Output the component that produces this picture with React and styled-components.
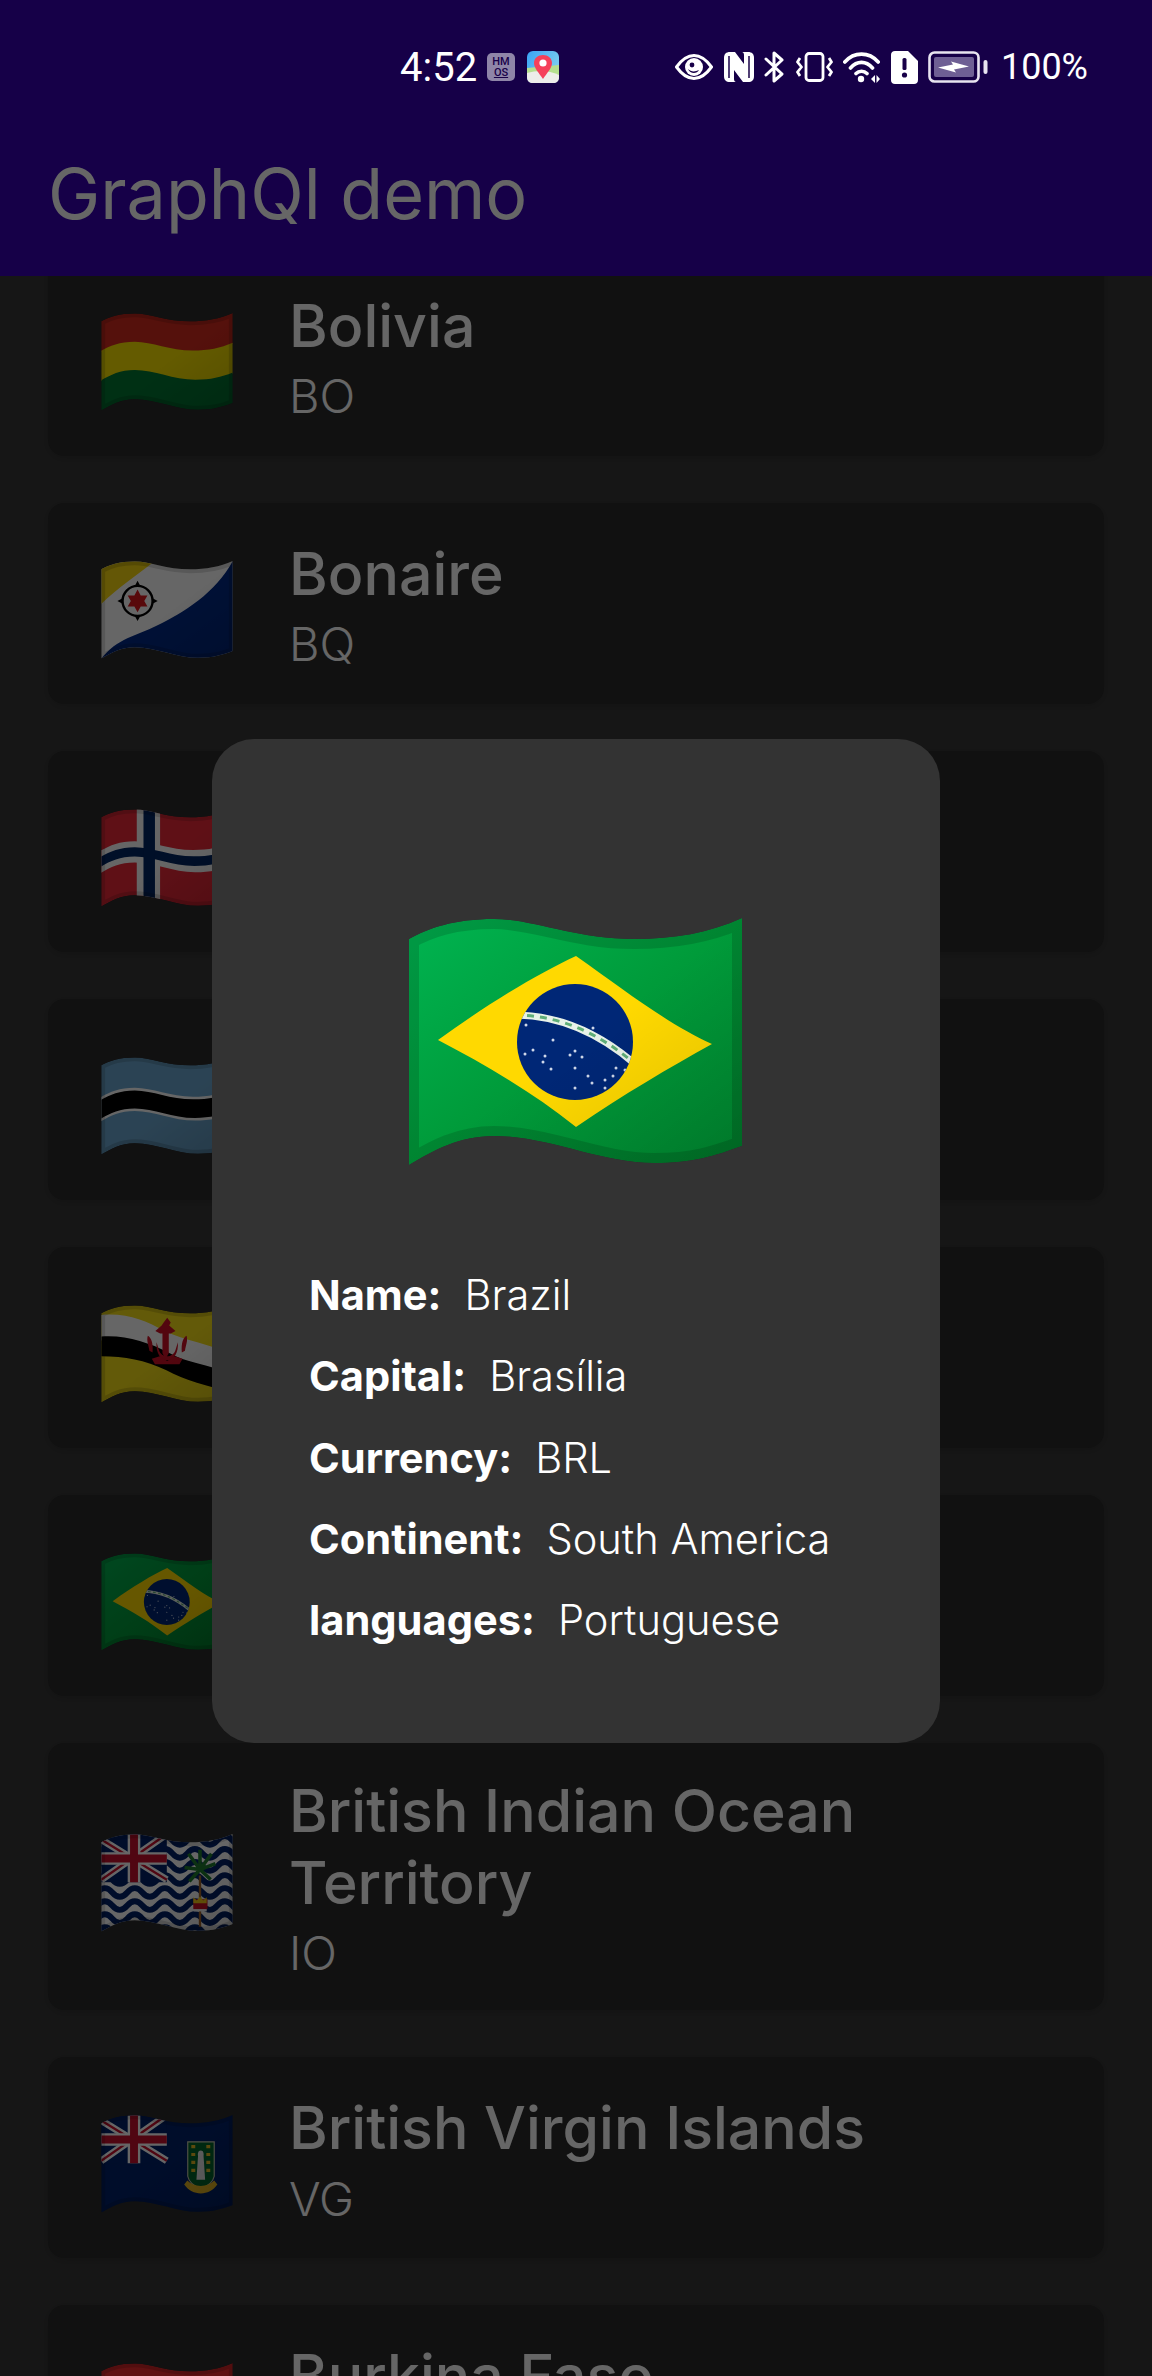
import React from "react";
import styled, { createGlobalStyle } from "styled-components";

// shared wave outline of the flag glyphs, top and bottom edges in the same 3 segments
const TOP = [[0, 21], [20, 10], [45, 1], [85, 1], [125, 1], [165, 21], [225, 21], [265, 21], [300, 15], [333, 0]];
const BOTTOM = [[0, 247], [25, 232], [50, 218], [85, 218], [140, 218], [190, 245], [245, 245], [285, 245], [305, 238], [333, 228]];

const edge = (v) =>
  TOP.map((p, i) => [p[0] + (BOTTOM[i][0] - p[0]) * v, p[1] + (BOTTOM[i][1] - p[1]) * v]);

const fmt = (p) => `${p[0].toFixed(1)} ${p[1].toFixed(1)}`;

// closed path for a stripe that follows the wave, v0 and v1 between 0 (top) and 1 (bottom)
const band = (v0, v1) => {
  const a = edge(v0);
  const b = edge(v1).reverse();
  return `M${fmt(a[0])} C${a.slice(1).map(fmt).join(" ")} L${fmt(b[0])} C${b.slice(1).map(fmt).join(" ")} Z`;
};

const waveOutline = band(0, 1);

const GlobalStyle = createGlobalStyle`
  html, body {
    margin: 0;
    padding: 0;
    background: #383838;
  }
`;

let flagCount = 0;

const Flag = ({ children, big }) => {
  const id = React.useMemo(() => `flag${flagCount++}`, []);
  return (
    <FlagSvg $big={big} viewBox="0 0 333 248">
      <defs>
        <clipPath id={`${id}c`}>
          <path d={waveOutline} />
        </clipPath>
        <linearGradient id={`${id}g`} x1="0" y1="0" x2="1" y2="1">
          <stop offset="0.5" stopColor="#000" stopOpacity="0" />
          <stop offset="1" stopColor="#000" stopOpacity="0.14" />
        </linearGradient>
      </defs>
      <g clipPath={`url(#${id}c)`}>
        {children}
        <rect width="333" height="248" fill={`url(#${id}g)`} />
        <path d={waveOutline} fill="none" stroke="#000" strokeOpacity="0.14" strokeWidth="20" />
      </g>
    </FlagSvg>
  );
};

const Bolivia = () => (
  <>
    <path d={band(0, 0.34)} fill="#d52b1e" />
    <path d={band(0.33, 0.67)} fill="#f9e300" />
    <path d={band(0.66, 1)} fill="#007934" />
  </>
);

const Bonaire = () => (
  <>
    <rect width="333" height="248" fill="#fff" />
    <path d="M0 109 C40 70 90 35 136 0 H0 Z" fill="#f9d90f" />
    <path d="M0 248 C40 195 90 190 140 164 C210 130 290 80 333 0 V248 Z" fill="#012a87" />
    <circle cx="92" cy="101" r="38" fill="none" stroke="#000" strokeWidth="6" />
    <path d="M92 50 l7 13 h-14z M92 152 l7 -13 h-14z M41 101 l13 -7 v14z M143 101 l-13 -7 v14z" fill="#000" />
    <path d="M92 72 l8 15 h17 l-8 14 l8 14 h-17 l-8 15 l-8 -15 h-17 l8 -14 l-8 -14 h17z" fill="#dc171d" />
  </>
);

const Bouvet = () => (
  <>
    <path d={band(0, 1)} fill="#ed2939" />
    <path d={band(0.37, 0.62)} fill="#fff" />
    <rect x="90" width="59" height="248" fill="#fff" />
    <path d={band(0.44, 0.55)} fill="#002664" />
    <rect x="107" width="29" height="248" fill="#002664" />
  </>
);

const Botswana = () => (
  <>
    <path d={band(0, 1)} fill="#6da9d2" />
    <path d={band(0.355, 0.625)} fill="#fff" />
    <path d={band(0.385, 0.595)} fill="#000" />
  </>
);

const Brunei = () => (
  <>
    <path d={band(0, 1)} fill="#f7e017" />
    <path d="M0 25 C70 20 110 40 160 65 C210 90 280 100 333 125 V190 C270 165 210 150 170 130 C120 105 60 90 0 90 Z" fill="#fff" />
    <path d="M0 80 C60 75 120 95 170 120 C210 145 270 150 333 175 V222 C270 205 210 190 165 165 C110 140 60 130 0 130 Z" fill="#000" />
    <g fill="#cf1126" transform="translate(28 10)">
      <path d="M130 34 l9 -12 l9 12 l-4 8 l16 14 l-12 6 h-5 v50 l-8 14 l-8 -14 v-50 h-6 l-12 -6 l16 -14z" />
      <path d="M90 68 c8 4 14 18 12 42 l-8 -4 c-2 -14 -8 -26 -4 -38z M188 68 c-8 4 -14 18 -12 42 l8 -4 c2 -14 8 -26 4 -38z" />
      <path d="M112 84 c-2 26 10 46 27 46 c17 0 29 -20 27 -46 l-6 20 c-3 10 -12 16 -21 16 c-9 0 -18 -6 -21 -16z" />
      <path d="M100 126 l20 -6 l19 12 l19 -12 l20 6 l-8 14 h-62z" />
    </g>
  </>
);

const stars = [
  [117, 107], [144, 122], [124, 132], [116, 136], [136, 138], [134, 144], [142, 151], [166, 133], [173, 139], [161, 137],
  [166, 150], [207, 150], [216, 152], [179, 158], [183, 165], [196, 162], [204, 158], [196, 170], [166, 170], [184, 110],
];

const Brazil = () => (
  <>
    <defs>
      <linearGradient id="brazilField" x1="0" y1="0" x2="1" y2="1">
        <stop offset="0" stopColor="#00b451" />
        <stop offset="0.5" stopColor="#009b3a" />
        <stop offset="1" stopColor="#008a30" />
      </linearGradient>
      <clipPath id="brazilGlobe">
        <ellipse cx="166" cy="124" rx="58" ry="58" />
      </clipPath>
    </defs>
    <path d={band(0, 1)} fill="url(#brazilField)" />
    <path d="M29 122 C80 85 130 55 167 38 C215 72 262 108 303 126 C260 150 215 176 167 209 C125 175 75 146 29 122 Z" fill="#ffd900" />
    <ellipse cx="166" cy="124" rx="58" ry="58" fill="#002776" />
    <g clipPath="url(#brazilGlobe)">
      <path d="M105 97 C150 97 190 115 226 146" fill="none" stroke="#e8f2e8" strokeWidth="7" />
      <path d="M105 97 C150 97 190 115 226 146" fill="none" stroke="#5fae78" strokeWidth="3" strokeDasharray="7 6" />
      {stars.map(([x, y]) => (
        <circle key={`${x}-${y}`} cx={x} cy={y} r="1.5" fill="#cfd8ea" />
      ))}
    </g>
  </>
);

const unionJack = (
  <>
    <rect width="166" height="122" fill="#012169" />
    <path d="M0 14 L166 116 M166 0 L0 116" stroke="#fff" strokeWidth="18" />
    <path d="M0 14 L166 116 M166 0 L0 116" stroke="#c8102e" strokeWidth="6" />
    <path d="M83 0 V122 M0 62 H166" stroke="#fff" strokeWidth="32" />
    <path d="M83 0 V122 M0 62 H166" stroke="#c8102e" strokeWidth="20" />
  </>
);

const Biot = () => (
  <>
    <rect width="333" height="248" fill="#fff" />
    {[0, 1, 2, 3, 4, 5, 6, 7].map((i) => (
      <path
        key={i}
        d={`M-10 ${i * 33 + 16} q19 -22 38 0 ${"t38 0 ".repeat(9)}`}
        fill="none"
        stroke="#012169"
        strokeWidth="15"
      />
    ))}
    {unionJack}
    <g transform="translate(11 10)">
      <path d="M239 95 V225" stroke="#a5672b" strokeWidth="6" />
      <path d="M239 80 L210 40 M239 80 L268 40 M239 80 L239 30 M239 80 L200 75 M239 80 L278 65 M239 80 L212 110 M239 80 L266 105" stroke="#1e7c2e" strokeWidth="9" />
      <path d="M222 155 h36 v24 c-8 8 -28 8 -36 0z" fill="#cf1126" />
      <path d="M222 150 l9 8 l8 -10 l8 10 l9 -8 v15 h-34z" fill="#fcd116" />
      <rect x="224" y="180" width="32" height="6" fill="#fff" />
    </g>
  </>
);

const Bvi = () => (
  <>
    <rect width="333" height="248" fill="#012169" />
    {unionJack}
    <g transform="translate(6 -50)">
      <path d="M213 118 H280 V205 C276 224 258 232 246 236 C234 232 217 224 213 205 Z" fill="#00662b" stroke="#c8c8b0" strokeWidth="3" />
      <path d="M246 140 c-7 0 -8 8 -7 14 l-4 60 h22 l-4 -60 c1 -6 0 -14 -7 -14z" fill="#e8e8e8" />
      <path d="M222 130 h10 M222 150 h10 M222 170 h10 M222 190 h10 M260 130 h10 M260 150 h10 M260 170 h10 M260 190 h10" stroke="#e8b923" strokeWidth="8" />
      <path d="M204 226 C225 256 267 256 288 226 L280 216 C264 234 228 234 212 216 Z" fill="#e8b923" />
    </g>
  </>
);

const BurkinaFaso = () => (
  <>
    <path d={band(0, 0.5)} fill="#ef2b2d" />
    <path d={band(0.5, 1)} fill="#009e49" />
  </>
);

const countries = [
  { name: "Bolivia", code: "BO", flag: <Bolivia /> },
  { name: "Bonaire", code: "BQ", flag: <Bonaire /> },
  { name: "Bouvet Island", code: "BV", flag: <Bouvet /> },
  { name: "Botswana", code: "BW", flag: <Botswana /> },
  { name: "Brunei", code: "BN", flag: <Brunei /> },
  { name: "Brazil", code: "BR", flag: <Brazil /> },
  { name: "British Indian Ocean Territory", code: "IO", flag: <Biot /> },
  { name: "British Virgin Islands", code: "VG", flag: <Bvi /> },
  { name: "Burkina Faso", code: "BF", flag: <BurkinaFaso /> },
];

const details = [
  ["Name:", "Brazil"],
  ["Capital:", "Brasília"],
  ["Currency:", "BRL"],
  ["Continent:", "South America"],
  ["languages:", "Portuguese"],
];

const StatusIcons = () => (
  <>
    <Icon width="38" height="26" viewBox="0 0 38 26">
      <path d="M1.5 13 C8 4 13 1.5 19 1.5 C25 1.5 30 4 36.5 13 C30 22 25 24.5 19 24.5 C13 24.5 8 22 1.5 13 Z" fill="none" stroke="#fff" strokeWidth="3" />
      <circle cx="19" cy="13" r="9" fill="#fff" />
      <path d="M13 15 C15 20 22 20 24 16 C20 18 16 18 13 15 Z" fill="#180048" />
      <circle cx="17" cy="11" r="2.4" fill="#180048" />
    </Icon>
    <Icon width="30" height="30" viewBox="0 0 30 30">
      <path d="M6 0 H11 L20 12 V3 C20 1 19 0 18 0 H24 C28 0 30 2 30 6 V24 C30 28 28 30 24 30 H19 L10 18 V27 C10 29 11 30 12 30 H6 C2 30 0 28 0 24 V6 C0 2 2 0 6 0 Z" fill="#fff" />
      <path d="M5 4 V26 M25 4 V26" stroke="#180048" strokeWidth="1.5" />
    </Icon>
    <Icon width="21" height="32" viewBox="0 0 21 32">
      <path d="M2 8 L18 23 L10 30 V2 L18 9 L2 24" fill="none" stroke="#fff" strokeWidth="3" strokeLinejoin="round" strokeLinecap="round" />
    </Icon>
    <Icon width="37" height="30" viewBox="0 0 37 30">
      <rect x="10" y="1.5" width="17" height="27" rx="3" fill="none" stroke="#fff" strokeWidth="2.8" />
      <path d="M4 6 L1.5 10 L5.5 15 L1.5 20 L4 24 M33 6 L35.5 10 L31.5 15 L35.5 20 L33 24" fill="none" stroke="#fff" strokeWidth="2.8" strokeLinejoin="round" />
    </Icon>
    <Icon width="37" height="32" viewBox="0 0 37 32">
      <path d="M1.8 11 C11 0.5 26 0.5 35.2 11 M7.5 17 C14 9.5 23 9.5 29.5 17 M13 22.5 C16 19.5 21 19.5 24 22.5" fill="none" stroke="#fff" strokeWidth="3.6" strokeLinecap="round" />
      <circle cx="18" cy="28" r="3.2" fill="#fff" />
      <path d="M28 28 l4 -4 v8z M33.5 24 l3.5 4 l-3.5 4z" fill="#fff" />
    </Icon>
    <Icon width="27" height="33" viewBox="0 0 27 33">
      <path d="M4 0 H17 L27 10 V29 C27 31.5 25.5 33 23 33 H4 C1.5 33 0 31.5 0 29 V4 C0 1.5 1.5 0 4 0 Z" fill="#fff" />
      <rect x="11.5" y="7" width="4" height="12" rx="1.5" fill="#180048" />
      <circle cx="13.5" cy="24" r="2.6" fill="#180048" />
    </Icon>
    <Icon width="60" height="32" viewBox="0 0 60 32">
      <rect x="1.5" y="1.5" width="49" height="29" rx="5" fill="none" stroke="#e8e4f0" strokeWidth="2.6" />
      <rect x="6" y="6" width="40" height="20" rx="2" fill="#6e5f94" />
      <path d="M10 16.5 L25 13.5 L23 10.5 L41 15.5 L26 18.5 L28 21.5 Z" fill="#fff" />
      <rect x="55.5" y="9" width="4" height="14" rx="2" fill="#e8e4f0" />
    </Icon>
  </>
);

const App = () => (
  <Page>
    <GlobalStyle />
    <AppBar>
      <StatusBar>
        <Clock>4:52</Clock>
        <HmBadge>
          <span>HM</span>
          <HmLow>OS</HmLow>
        </HmBadge>
        <Icon width="32" height="32" viewBox="0 0 32 32">
          <defs>
            <linearGradient id="mapSky" x1="0" y1="0" x2="1" y2="0.6">
              <stop offset="0" stopColor="#3aa3f5" />
              <stop offset="1" stopColor="#7fd0f0" />
            </linearGradient>
          </defs>
          <rect width="32" height="32" rx="6" fill="url(#mapSky)" />
          <path d="M0 17 L32 14 V24 H0 Z" fill="#b5df8f" />
          <path d="M0 22 C10 19 22 19 32 24 V26 C32 30 30 32 26 32 H6 C2 32 0 30 0 26 Z" fill="#ededea" />
          <path d="M16 28 C12 22 7 17 7 12 C7 7 11 4 16 4 C21 4 25 7 25 12 C25 17 20 22 16 28 Z" fill="#f5405a" />
          <circle cx="16" cy="12" r="3.6" fill="#fff" />
        </Icon>
        <StatusRight>
          <StatusIcons />
          <Battery>100%</Battery>
        </StatusRight>
      </StatusBar>
      <Title>GraphQl demo</Title>
    </AppBar>

    <List>
      {countries.map((c) => (
        <Card key={c.code}>
          <FlagSlot>
            <Flag>{c.flag}</Flag>
          </FlagSlot>
          <CardText>
            <CountryName>{c.name}</CountryName>
            <CountryCode>{c.code}</CountryCode>
          </CardText>
        </Card>
      ))}
    </List>

    <Scrim>
      <Dialog>
        <DialogFlag>
          <Flag big>
            <Brazil />
          </Flag>
        </DialogFlag>
        <DetailList>
          {details.map(([label, value]) => (
            <DetailRow key={label}>
              <DetailLabel>{label}</DetailLabel>
              <span>{value}</span>
            </DetailRow>
          ))}
        </DetailList>
      </Dialog>
    </Scrim>
  </Page>
);

const sans = `"Inter", "Noto Sans", sans-serif`;

const Page = styled.div`
  position: relative;
  width: 1152px;
  height: 2376px;
  overflow: hidden;
  background: #383838;
  font-family: ${sans};
`;

const AppBar = styled.header`
  position: relative;
  height: 276px;
  background: #3700b3;
  box-sizing: border-box;
`;

const StatusBar = styled.div`
  position: relative;
  z-index: 3;
  display: flex;
  align-items: center;
  height: 134px;
  padding: 0 64px 0 400px;
  box-sizing: border-box;
  color: #fff;
`;

const Clock = styled.span`
  font-family: "Roboto", sans-serif;
  font-size: 40px;
  width: 87px;
`;

const HmBadge = styled.span`
  display: flex;
  flex-direction: column;
  align-items: center;
  justify-content: center;
  width: 28px;
  height: 28px;
  margin-right: 12px;
  border-radius: 5px;
  background: #8f85a8;
  color: #180048;
  font-family: "Roboto", sans-serif;
  font-size: 11px;
  font-weight: 500;
  line-height: 11px;
`;

const HmLow = styled.span`
  text-decoration: underline;
`;

const Icon = styled.svg`
  display: block;
  flex: none;
`;

const StatusRight = styled.div`
  display: flex;
  align-items: center;
  gap: 10.5px;
  margin-left: auto;
`;

const Battery = styled.span`
  font-family: "Roboto", sans-serif;
  font-size: 36px;
  margin-left: 2px;
`;

const Title = styled.h1`
  margin: 0;
  padding-left: 48px;
  font-size: 70px;
  font-weight: 400;
  line-height: 120px;
  color: #fff;
`;

const List = styled.div`
  display: flex;
  flex-direction: column;
  gap: 47px;
  padding: 0 48px;
  margin-top: -21px;
`;

const Card = styled.article`
  display: flex;
  align-items: center;
  gap: 56px;
  min-height: 201px;
  padding: 32px 0 24px 53px;
  box-sizing: border-box;
  border-radius: 16px;
  background: #2b2b2b;
  box-shadow: 0 2px 8px rgba(0, 0, 0, 0.12);
  color: #fff;
`;

const FlagSlot = styled.div`
  flex: none;
  display: flex;
  padding-top: 4px;
`;

const FlagSvg = styled.svg`
  display: block;
  width: ${(p) => (p.$big ? "333px" : "132px")};
  height: ${(p) => (p.$big ? "248px" : "98px")};
`;

const CardText = styled.div`
  display: flex;
  flex-direction: column;
  width: 640px;
`;

const CountryName = styled.div`
  font-size: 59px;
  font-weight: 500;
  line-height: 71.7px;
`;

const CountryCode = styled.div`
  margin-top: 2px;
  font-size: 47px;
  font-weight: 300;
  line-height: 66px;
`;

const Scrim = styled.div`
  position: absolute;
  inset: 0;
  z-index: 2;
  display: flex;
  align-items: flex-start;
  justify-content: center;
  padding-top: 739px;
  box-sizing: border-box;
  background: rgba(0, 0, 0, 0.6);
`;

const Dialog = styled.section`
  width: 728px;
  height: 1004px;
  padding: 179px 0 0 97px;
  box-sizing: border-box;
  border-radius: 42px;
  background: #333;
  color: #fff;
`;

const DialogFlag = styled.div`
  display: flex;
  padding-left: 100px;
`;

const DetailList = styled.div`
  margin-top: 89px;
`;

const DetailRow = styled.div`
  display: flex;
  gap: 23px;
  font-size: 41.6px;
  line-height: 81.25px;
  font-weight: 300;
`;

const DetailLabel = styled.span`
  font-weight: 700;
`;

export default App;
